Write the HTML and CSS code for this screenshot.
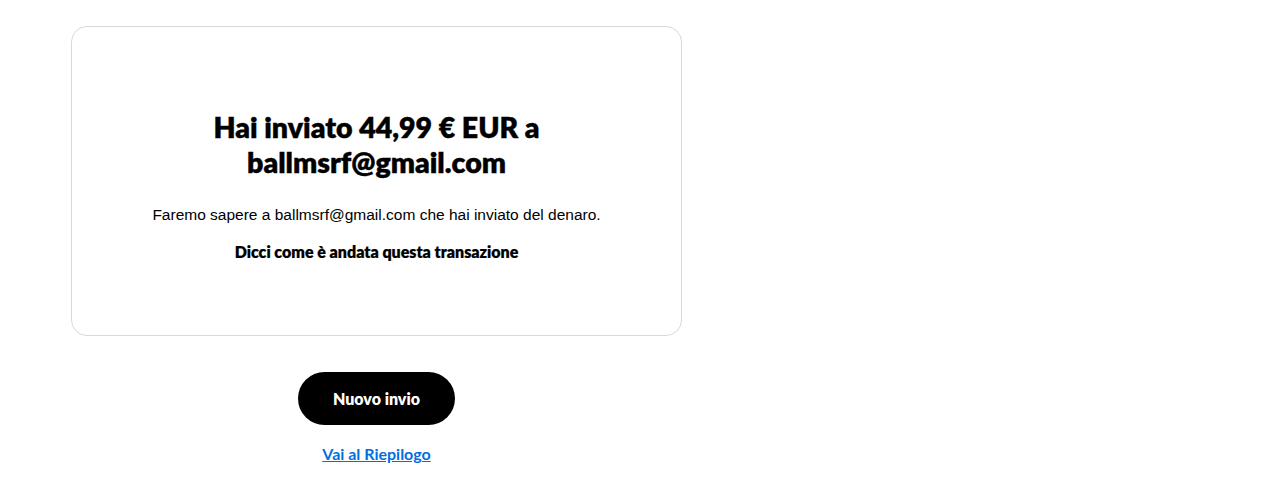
FILE: index.html
```html
<!DOCTYPE html>
<html>

<head>
    <title>Invio completato</title>
    <link rel="stylesheet" href="styles.css">
</head>

<body>
    <div class="page">
        <div class="card">
            <h1>Hai inviato 44,99 € EUR a<br>ballmsrf@gmail.com</h1>
            <p class="note">Faremo sapere a ballmsrf@gmail.com che hai inviato del denaro.</p>
            <p class="feedback">Dicci come è andata questa transazione</p>
        </div>

        <div class="actions">
            <button type="button" class="btn">Nuovo invio</button>
            <a href="#" class="link">Vai al Riepilogo</a>
        </div>
    </div>
</body>

</html>
```

FILE: styles.css
```css
body {
    margin: 0;
    background: #ffffff;
    color: #000000;
    font-family: "Liberation Sans", Arial, sans-serif;
}

.page {
    width: 611px;
    padding: 26px 0 0 71px;
}

.card {
    border: 1px solid #d9d9d9;
    border-radius: 16px;
    padding: 83px 40px 73px;
    text-align: center;
}

.card h1 {
    margin: 0;
    font-family: Lato, sans-serif;
    font-weight: 800;
    font-size: 28.5px;
    line-height: 35px;
    -webkit-text-stroke: 0.4px #000;
}

.card .note {
    margin: 24px 0 0;
    font-size: 15.5px;
    line-height: 22px;
}

.card .feedback {
    margin: 16px 0 0;
    font-family: Lato, sans-serif;
    font-weight: 800;
    font-size: 16px;
    line-height: 20px;
    -webkit-text-stroke: 0.2px #000;
}

.actions {
    display: flex;
    flex-direction: column;
    align-items: center;
    margin-top: 36px;
}

.btn {
    width: 157px;
    height: 53px;
    border: none;
    border-radius: 27px;
    background: #000000;
    color: #ffffff;
    font-family: Lato, sans-serif;
    font-weight: 800;
    font-size: 16px;
    cursor: pointer;
}

.link {
    margin-top: 19px;
    color: #0070e0;
    font-family: Lato, sans-serif;
    font-weight: 700;
    font-size: 16px;
    line-height: 20px;
    text-decoration: underline;
}
```
